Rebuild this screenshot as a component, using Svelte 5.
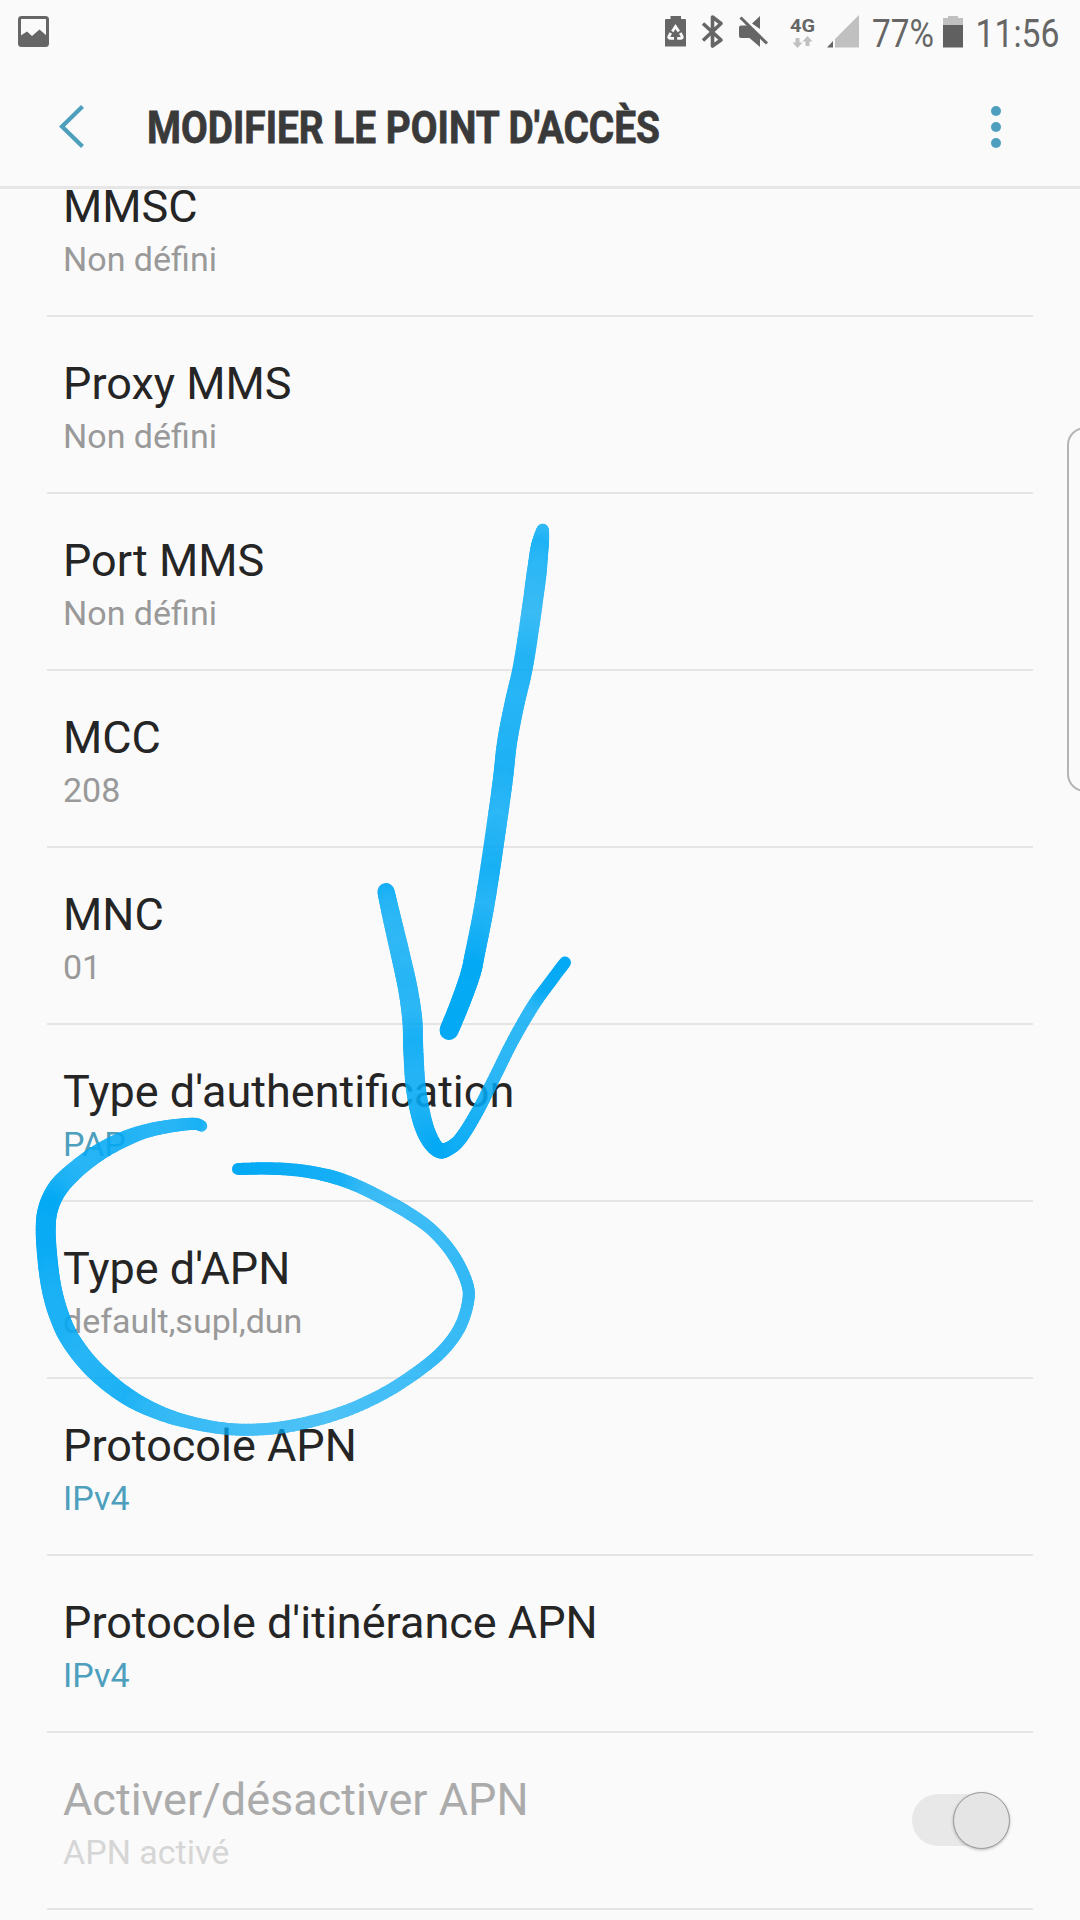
<script>
  const rows = [
    { title: 'MMSC', value: 'Non défini' },
    { title: 'Proxy MMS', value: 'Non défini' },
    { title: 'Port MMS', value: 'Non défini' },
    { title: 'MCC', value: '208' },
    { title: 'MNC', value: '01' },
    { title: "Type d'authentification", value: 'PAP', accent: true },
    { title: "Type d'APN", value: 'default,supl,dun' },
    { title: 'Protocole APN', value: 'IPv4', accent: true },
    { title: "Protocole d'itinérance APN", value: 'IPv4', accent: true },
    { title: 'Activer/désactiver APN', value: 'APN activé', disabled: true, toggle: true },
    { title: '', value: '' }
  ];

  // Pen strokes: [x, y, width, ink density]
  const shaft = [
    [542.7, 530, 12, 0.8], [541, 539.6, 16, 0.85], [539.3, 549.8, 18, 0.9], [536, 578, 20, 0.83],
    [529.7, 624, 20, 0.78], [522.7, 668, 20, 0.88], [514, 706, 20, 0.86], [507, 742.9, 20, 0.88],
    [503, 778.6, 20, 0.9], [496.7, 824.6, 20, 0.84], [488.8, 878.2, 20, 0.92], [482.8, 914.3, 20, 0.86],
    [475, 953.2, 20, 0.95], [470.5, 974, 20, 1], [460, 1003.6, 19.5, 0.99], [449, 1030.5, 19, 1]
  ];
  const head = [
    [386, 891.7, 17, 0.95], [390.7, 913, 18, 0.86], [399.3, 950, 19, 0.82], [407.7, 988, 19.5, 0.86],
    [412.3, 1020, 20, 0.84], [413.3, 1050, 20, 0.92], [415.7, 1086.7, 20, 0.87], [421.5, 1118, 19.5, 0.9],
    [429, 1138.3, 18, 0.95], [438.3, 1150, 15.5, 1], [447, 1149.5, 14, 1], [460, 1139.3, 13, 0.95],
    [477.3, 1111.7, 12.5, 0.92], [495, 1076.7, 12, 0.85], [513.3, 1040, 12, 0.83], [533, 1006, 12.5, 0.82],
    [547.3, 986, 12, 0.97], [565, 962.5, 12, 1]
  ];
  const loop = [
    [201.7, 1126, 11, 0.8], [193, 1123.8, 12, 0.92], [166.7, 1126.7, 13, 0.86], [143, 1132, 14, 0.85],
    [120, 1141, 16, 0.88], [98, 1153, 17, 0.88], [76.7, 1169, 18, 0.85], [58.3, 1187.5, 20, 0.9],
    [48.3, 1208, 20, 1], [45.7, 1230, 20, 0.98], [47.8, 1262, 20, 0.97], [51.7, 1289, 20, 0.92],
    [58.3, 1313, 20, 0.9], [68.8, 1337, 19.5, 0.9], [86.7, 1361.7, 19, 0.86], [108, 1382.2, 18.5, 0.88],
    [133, 1400, 17, 0.9], [160, 1413, 14.5, 0.82], [186.7, 1421.5, 13, 0.78], [220, 1428, 12, 0.77],
    [253, 1429.7, 12, 0.74], [293, 1425.5, 12, 0.72], [340, 1413, 12, 0.7], [380, 1395.5, 12, 0.74],
    [413, 1375, 12, 0.74], [441, 1352.5, 12, 0.8], [459.5, 1328, 12, 0.78], [468.2, 1301, 12, 0.8],
    [466.5, 1281.7, 12, 0.82], [453.3, 1255, 12, 0.8], [433, 1231, 12, 0.77], [410, 1214, 12.5, 0.77],
    [383, 1198.5, 12.5, 0.76], [357, 1185.7, 12.5, 0.79], [333, 1177, 13, 0.93],
    [304, 1171, 12.5, 0.94], [271, 1168.5, 12.5, 0.97], [238, 1169, 12, 1]
  ];

  // Catmull-Rom subdivision into short round-capped segments
  function ink(points) {
    const out = [];
    const steps = 8;
    let last = points[0];
    for (let i = 0; i < points.length - 1; i++) {
      const b = points[i];
      const c = points[i + 1];
      const a = points[i - 1] ?? b;
      const d = points[i + 2] ?? c;
      for (let s = 1; s <= steps; s++) {
        const t = s / steps;
        const spline = (k) =>
          0.5 * (2 * b[k] + (c[k] - a[k]) * t + (2 * a[k] - 5 * b[k] + 4 * c[k] - d[k]) * t * t +
            (3 * b[k] - a[k] - 3 * c[k] + d[k]) * t * t * t);
        const next = [spline(0), spline(1), b[2] + (c[2] - b[2]) * t, b[3] + (c[3] - b[3]) * t];
        const g = Math.round(next[3] * 255);
        out.push({ x1: last[0], y1: last[1], x2: next[0], y2: next[1], w: next[2], tone: `rgb(${g},${g},${g})` });
        last = next;
      }
    }
    return out;
  }
  const segments = [...ink(shaft), ...ink(head), ...ink(loop)];
</script>

<div class="screen">
  <div class="status">
    <svg class="picture" width="31" height="31" viewBox="0 0 31 31">
      <rect x="1.5" y="1.5" width="28" height="28" rx="2" fill="none" stroke="#666" stroke-width="3" />
      <path d="M2 20L9 15.5L14 20L21.5 13.5L29 20V29H2Z" fill="#666" />
    </svg>
    <svg class="icons" width="420" height="56" viewBox="660 0 420 56">
      <g fill="#666">
        <path d="M670.5 16H681V19H685Q686 19 686 20V46.5H665V20Q665 19 666 19H670.5Z" />
        <g fill="none" stroke="#fafafa" stroke-width="2.8">
          <path d="M672.3 31.5L675.5 26.5L678.8 31.5" />
          <path d="M670.8 33L668.8 36.5Q668.3 38.4 670.5 38.4H674" />
          <path d="M680.2 33L682.2 36.5Q682.7 38.4 680.5 38.4H677.2" />
        </g>
        <path d="M703 23.5L721 40L712.5 46V17L721 23.5L703 40.5" fill="none" stroke="#666" stroke-width="3.6" stroke-linejoin="round" />
        <path d="M741 25.5H748.5L760 37V47L749.5 38H741Q739 38 739 36V27.500Q739 25.500 741 25.500Z" />
        <path d="M760 16V29L752 23.5Z" />
        <path d="M740.5 17.5L767 43.5" stroke="#666" stroke-width="3" />
        <path d="M833 41V47.5H827Z" />
      </g>
      <g fill="#c0c0c0">
        <path d="M795.5 38H799.5V42.5H802.5L797.5 48L792.5 42.5H795.5Z" />
        <path d="M805.5 46V41.5H802.5L807.5 36L812.5 41.5H809.5V46Z" />
        <path d="M859 15V47.5H835V39Z" />
        <path d="M948 16H958V18H963V25H943V18H948Z" />
      </g>
      <rect x="943" y="25" width="20" height="22.5" fill="#606060" />
      <text class="net" x="790" y="31.5" textLength="25" lengthAdjust="spacingAndGlyphs">4G</text>
      <text class="num" x="872" y="47" textLength="62" lengthAdjust="spacingAndGlyphs">77%</text>
      <text class="num" x="975.5" y="47" textLength="84" lengthAdjust="spacingAndGlyphs">11:56</text>
    </svg>
  </div>

  <header>
    <svg class="back" width="26" height="44" viewBox="0 0 26 44">
      <path d="M23.5 1.5L3 21.5L23.5 41.5" fill="none" stroke="#4d9fbd" stroke-width="4.2" />
    </svg>
    <h1>
      <svg width="540" height="72" viewBox="0 0 540 72">
        <text x="0" y="54" textLength="513" lengthAdjust="spacingAndGlyphs">MODIFIER LE POINT D'ACCÈS</text>
      </svg>
    </h1>
    <div class="more"><i></i><i></i><i></i></div>
  </header>

  <main>
    <div class="list">
      {#each rows as row}
        <div class="row" class:disabled={row.disabled}>
          <div>
            <div class="title">{row.title}</div>
            <div class="value" class:accent={row.accent}>{row.value}</div>
          </div>
          {#if row.toggle}
            <div class="toggle"><span></span></div>
          {/if}
        </div>
      {/each}
    </div>
  </main>

  <div class="edge"></div>

  <svg class="pen" width="1080" height="1920" viewBox="0 0 1080 1920">
    <mask id="ink" maskUnits="userSpaceOnUse" x="0" y="0" width="1080" height="1920">
      {#each segments as s}
        <line x1={s.x1} y1={s.y1} x2={s.x2} y2={s.y2} stroke={s.tone} stroke-width={s.w} stroke-linecap="round" />
      {/each}
    </mask>
    <rect width="1080" height="1920" fill="#03a9f4" mask="url(#ink)" />
  </svg>
</div>

<style>
  :global(body) {
    margin: 0;
    background: #fafafa;
  }
  .screen {
    position: relative;
    display: flex;
    flex-direction: column;
    width: 1080px;
    height: 1920px;
    overflow: hidden;
    background: #fafafa;
    font-family: Roboto, 'Liberation Sans', sans-serif;
  }
  svg {
    display: block;
  }
  .status {
    display: flex;
    justify-content: space-between;
    height: 64px;
    flex: none;
  }
  .picture {
    margin: 16px 0 0 18px;
  }
  .net {
    font-size: 19px;
    font-weight: 700;
    fill: #666;
  }
  .num {
    font-size: 39px;
    fill: #666;
  }
  header {
    display: flex;
    align-items: center;
    height: 122px;
    flex: none;
    padding: 0 79.5px 0 59px;
    border-bottom: 3px solid #e6e6e6;
  }
  .back {
    margin-top: 4px;
  }
  h1 {
    flex: 1;
    margin: 0 0 0 62px;
    font-size: 45px;
    font-weight: 700;
  }
  h1 svg {
    overflow: visible;
  }
  h1 text {
    fill: #3a3a3a;
    stroke: #3a3a3a;
    stroke-width: 0.8px;
  }
  .more {
    display: flex;
    flex-direction: column;
    gap: 6px;
    margin-top: 3px;
  }
  .more i {
    width: 10px;
    height: 10px;
    border-radius: 50%;
    background: #4d9fbd;
  }
  main {
    flex: 1;
    min-height: 0;
    overflow: hidden;
  }
  .list {
    margin: -49px 47px 0;
  }
  .row {
    box-sizing: border-box;
    display: flex;
    justify-content: space-between;
    height: 177px;
    padding: 40px 23px 0 16px;
    border-bottom: 2px solid #e5e5e5;
  }
  .title {
    font-size: 45px;
    line-height: 54px;
    color: #252525;
  }
  .value {
    margin-top: 2px;
    font-size: 34px;
    line-height: 46px;
    color: #999;
  }
  .value.accent {
    color: #4d9fbd;
  }
  .disabled .title {
    color: #ababab;
  }
  .disabled .value {
    color: #d6d6d6;
  }
  .toggle {
    display: flex;
    align-items: center;
    justify-content: flex-end;
    width: 98px;
    height: 52px;
    margin-top: 21px;
    border-radius: 26px;
    background: #e8e8e8;
  }
  .toggle span {
    box-sizing: border-box;
    width: 57px;
    height: 57px;
    flex: none;
    border: 1px solid #999;
    border-radius: 50%;
    background: #e5e5e5;
    box-shadow: 0 1px 3px rgba(0, 0, 0, 0.25);
  }
  .edge {
    position: absolute;
    left: 1067px;
    top: 427px;
    box-sizing: border-box;
    width: 60px;
    height: 365px;
    border: 2px solid #b4b4b4;
    border-radius: 18px;
  }
  .pen {
    position: absolute;
    left: 0;
    top: 0;
  }
</style>
